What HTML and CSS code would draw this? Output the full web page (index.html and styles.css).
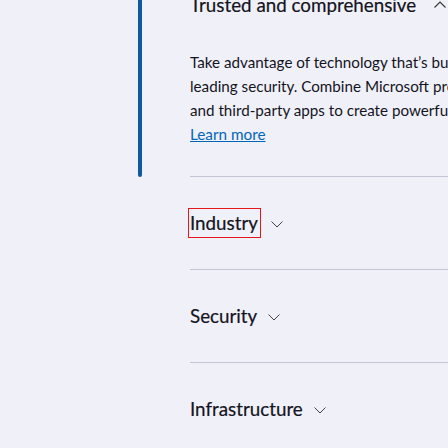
FILE: index.html
```html
<!DOCTYPE html>
<html>
<head>
<meta charset="utf-8">
<link rel="stylesheet" href="styles.css">
</head>
<body>
<div class="page">
  <div class="list">
    <div class="item open">
      <div class="bar"></div>
      <div class="body">
        <div class="head">
          <span class="title">Trusted and comprehensive</span>
          <svg class="chev" width="12" height="7" viewBox="0 0 12 7"><path d="M0.5 6.5 L6 1 L11.5 6.5" fill="none" stroke="#333" stroke-width="1.1"/></svg>
        </div>
        <p class="text">Take advantage of technology that’s built with industry-<br>leading security. Combine Microsoft products<br>and third-party apps to create powerful solutions.</p>
        <a class="link" href="#">Learn more</a>
      </div>
    </div>
    <div class="item">
      <div class="spacer"></div>
      <div class="body">
        <div class="head">
          <span class="title marked">Industry</span>
          <svg class="chev" width="12" height="7" viewBox="0 0 12 7"><path d="M0.5 0.5 L6 6 L11.5 0.5" fill="none" stroke="#444" stroke-width="1"/></svg>
        </div>
      </div>
    </div>
    <div class="item">
      <div class="spacer"></div>
      <div class="body">
        <div class="head">
          <span class="title">Security</span>
          <svg class="chev" width="12" height="7" viewBox="0 0 12 7"><path d="M0.5 0.5 L6 6 L11.5 0.5" fill="none" stroke="#444" stroke-width="1"/></svg>
        </div>
      </div>
    </div>
    <div class="item">
      <div class="spacer"></div>
      <div class="body">
        <div class="head">
          <span class="title">Infrastructure</span>
          <svg class="chev" width="12" height="7" viewBox="0 0 12 7"><path d="M0.5 0.5 L6 6 L11.5 0.5" fill="none" stroke="#444" stroke-width="1"/></svg>
        </div>
      </div>
    </div>
  </div>
</div>
</body>
</html>
```

FILE: styles.css
```css
html, body {
  margin: 0;
  padding: 0;
  background: #f0f0f8;
  overflow: hidden;
}
.page {
  width: 448px;
  height: 448px;
  overflow: hidden;
  font-family: Lato, "Noto Sans", sans-serif;
  color: #14141e;
}
.list {
  margin-top: -41px;
  padding-left: 138px;
}
.item {
  display: flex;
  gap: 48px;
}
.bar {
  width: 4px;
  background: #0f5a9e;
  border-radius: 0 0 2px 2px;
  flex: none;
}
.spacer {
  width: 4px;
  flex: none;
}
.body {
  flex: 1;
  min-width: 0;
  border-bottom: 1px solid #c3c6d4;
  white-space: nowrap;
}
.open .body {
  padding-bottom: 30px;
}
.head {
  display: flex;
  align-items: center;
  gap: 11px;
  padding: 32px 0;
  height: 28px;
}
.open .head {
  padding-bottom: 31px;
  gap: 18px;
}
.title {
  font-size: 18.8px;
  line-height: 28px;
  font-weight: 400;
  -webkit-text-stroke: 0.2px #14141e;
}
.marked {
  outline: 1px solid #e8161b;
  margin-left: -1px;
  padding: 0 2px 0 1px;
}
.chev {
  flex: none;
  margin-top: 2px;
}
.open .chev {
  margin-top: -2px;
}
.text {
  margin: 0;
  font-size: 15.2px;
  line-height: 24px;
}
.link {
  display: inline-block;
  font-size: 15.3px;
  line-height: 24px;
  color: #0067b8;
  text-decoration: underline;
}
```
